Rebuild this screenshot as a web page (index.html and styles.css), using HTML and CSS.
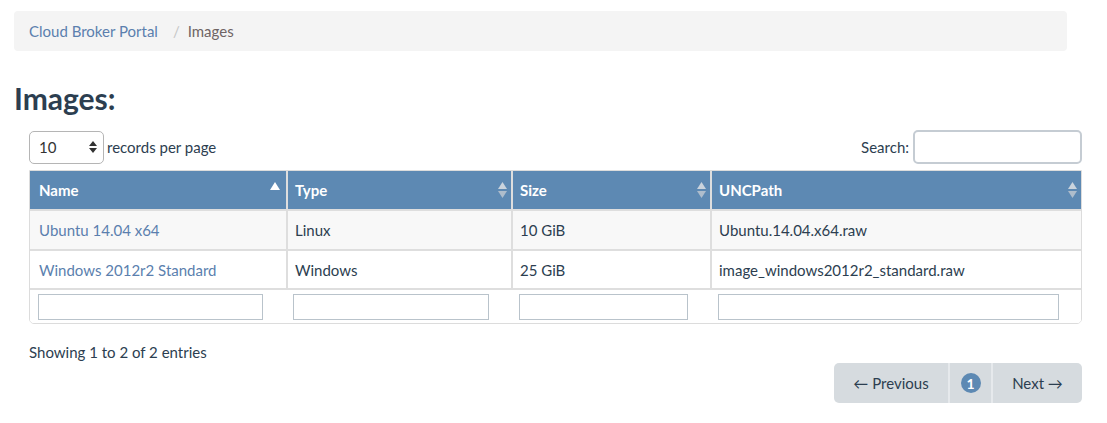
FILE: index.html
```html
<!DOCTYPE html>
<html>
<head>
<meta charset="utf-8">
<link rel="stylesheet" href="styles.css">
</head>
<body>
<nav class="breadcrumb">
  <a class="crumb-link" href="#">Cloud Broker Portal</a>
  <span class="crumb-sep">/</span>
  <span class="crumb-active">Images</span>
</nav>
<h1 class="title">Images:</h1>
<div class="dt">
  <div class="dt-top">
    <div class="length">
      <div class="select"><span>10</span>
        <svg class="sel-arrows" width="8" height="12" viewBox="0 0 8 12"><path d="M4 0 L8 5 H0 Z M0 7 H8 L4 12 Z" fill="#333"/></svg>
      </div>
      <span class="length-label">records per page</span>
    </div>
    <div class="search">
      <span>Search:</span>
      <div class="search-input"></div>
    </div>
  </div>
  <div class="table">
    <div class="row head">
      <div class="cell c1">Name<span class="sort asc"><svg width="10" height="8" viewBox="0 0 10 8"><path d="M5 0 L10 8 H0 Z" fill="#fff"/></svg></span></div>
      <div class="cell c2">Type<span class="sort"><svg width="9" height="16" viewBox="0 0 9 16"><path d="M4.5 0 L9 7 H0 Z" fill="#c9d3dd"/><path d="M0 9 H9 L4.5 16 Z" fill="#aebdcc"/></svg></span></div>
      <div class="cell c3">Size<span class="sort"><svg width="9" height="16" viewBox="0 0 9 16"><path d="M4.5 0 L9 7 H0 Z" fill="#c9d3dd"/><path d="M0 9 H9 L4.5 16 Z" fill="#aebdcc"/></svg></span></div>
      <div class="cell c4">UNCPath<span class="sort"><svg width="9" height="16" viewBox="0 0 9 16"><path d="M4.5 0 L9 7 H0 Z" fill="#c9d3dd"/><path d="M0 9 H9 L4.5 16 Z" fill="#aebdcc"/></svg></span></div>
    </div>
    <div class="row odd">
      <div class="cell c1"><a href="#" class="link">Ubuntu 14.04 x64</a></div>
      <div class="cell c2">Linux</div>
      <div class="cell c3">10 GiB</div>
      <div class="cell c4">Ubuntu.14.04.x64.raw</div>
    </div>
    <div class="row even">
      <div class="cell c1"><a href="#" class="link">Windows 2012r2 Standard</a></div>
      <div class="cell c2">Windows</div>
      <div class="cell c3">25 GiB</div>
      <div class="cell c4">image_windows2012r2_standard.raw</div>
    </div>
    <div class="row filters">
      <div class="cell c1"><div class="finput w1"></div></div>
      <div class="cell c2"><div class="finput w2"></div></div>
      <div class="cell c3"><div class="finput w3"></div></div>
      <div class="cell c4"><div class="finput w4"></div></div>
    </div>
  </div>
  <div class="info">Showing 1 to 2 of 2 entries</div>
  <div class="pager-row">
    <div class="pager">
      <div class="pg prev">&larr; Previous</div>
      <div class="pg num"><span class="badge">1</span></div>
      <div class="pg next">Next &rarr;</div>
    </div>
  </div>
</div>
</body>
</html>
```

FILE: styles.css
```css
* { box-sizing: border-box; }
body {
  margin: 0;
  padding: 11px 14px 0 14px;
  font-family: Lato, "Open Sans", "Liberation Sans", sans-serif;
  font-size: 15px;
  color: #2c3e50;
  background: #fff;
}
a { text-decoration: none; }
.breadcrumb {
  width: 1053px;
  height: 40px;
  background: #f4f4f4;
  border-radius: 4px;
  display: flex;
  align-items: center;
  padding: 0 15px;
}
.crumb-link { color: #5b7fae; }
.crumb-sep { color: #c6c6c6; margin: 0 8px 0 15px; }
.crumb-active { color: #6f6464; }
.title {
  margin: 29px 0 0 0;
  font-size: 30px;
  font-weight: 700;
  line-height: 36px;
  color: #2c3e50;
}
.dt { margin-left: 15px; width: 1053px; }
.dt-top {
  margin-top: 14px;
  display: flex;
  justify-content: space-between;
  align-items: center;
  height: 34px;
}
.length { display: flex; align-items: center; }
.select {
  width: 75px;
  height: 33px;
  border: 1px solid #b5b5b5;
  border-radius: 5px;
  display: flex;
  align-items: center;
  justify-content: space-between;
  padding: 0 6px 0 9px;
  color: #333;
  background: #fff;
}
.sel-arrows { display: block; }
.length-label { margin-left: 3px; color: #2c3e50; }
.search { display: flex; align-items: center; }
.search span { margin-right: 4px; color: #2c3e50; }
.search-input {
  width: 169px;
  height: 34px;
  border: 2px solid #c5ccd3;
  border-radius: 5px;
}
.table {
  margin-top: 6px;
  border: 1px solid #dcdcdc;
  border-radius: 0 0 5px 5px;
  overflow: hidden;
}
.row { display: flex; }
.cell {
  padding: 0 7px;
  display: flex;
  align-items: center;
  border-left: 2px solid #dedede;
}
.cell.c1 { border-left: 0; width: 256px; padding-left: 9px; }
.cell.c2 { width: 225px; }
.cell.c3 { width: 199px; }
.cell.c4 { width: 371px; }
.head { background: #5d89b3; height: 38px; }
.head .cell {
  color: #fff;
  font-weight: 700;
  justify-content: space-between;
  padding-right: 4px;
}
.head .cell.c1 { padding-right: 6px; }
.sort { display: flex; align-items: center; }
.sort svg { display: block; }
.sort.asc { margin-top: -9px; }
.odd { background: #f8f8f8; height: 40px; border-top: 2px solid #dedede; }
.even { background: #fff; height: 39px; border-top: 2px solid #dedede; }
.odd .cell, .even .cell { color: #2c3e50; }
.link { color: #5b7fae; }
.filters { height: 35px; border-top: 2px solid #dedede; background: #fff; }
.filters .cell { border-left: 0; padding-left: 8px; }
.filters .cell.c2 { padding-left: 7px; }
.filters .cell.c3 { padding-left: 8px; }
.filters .cell.c4 { padding-left: 8px; }
.finput {
  height: 26px;
  border: 1px solid #b9c3cb;
  background: #fff;
}
.w1 { width: 225px; }
.w2 { width: 196px; }
.w3 { width: 169px; }
.w4 { width: 341px; }
.info {
  margin-top: 18px;
  color: #2c3e50;
  line-height: 20px;
}
.pager-row { display: flex; justify-content: flex-end; margin-top: 1px; }
.pager {
  display: flex;
  height: 40px;
  background: #d6dbdf;
  border-radius: 5px;
  overflow: hidden;
}
.pg {
  display: flex;
  align-items: center;
  justify-content: center;
  color: #2c3e50;
}
.prev { width: 114px; }
.num { width: 45px; border-left: 2px solid #e6e9ec; border-right: 2px solid #e6e9ec; }
.next { width: 89px; }
.badge {
  width: 20px;
  height: 20px;
  border-radius: 50%;
  background: #5d89b3;
  color: #fff;
  font-weight: 700;
  font-size: 14px;
  display: flex;
  align-items: center;
  justify-content: center;
}
```
